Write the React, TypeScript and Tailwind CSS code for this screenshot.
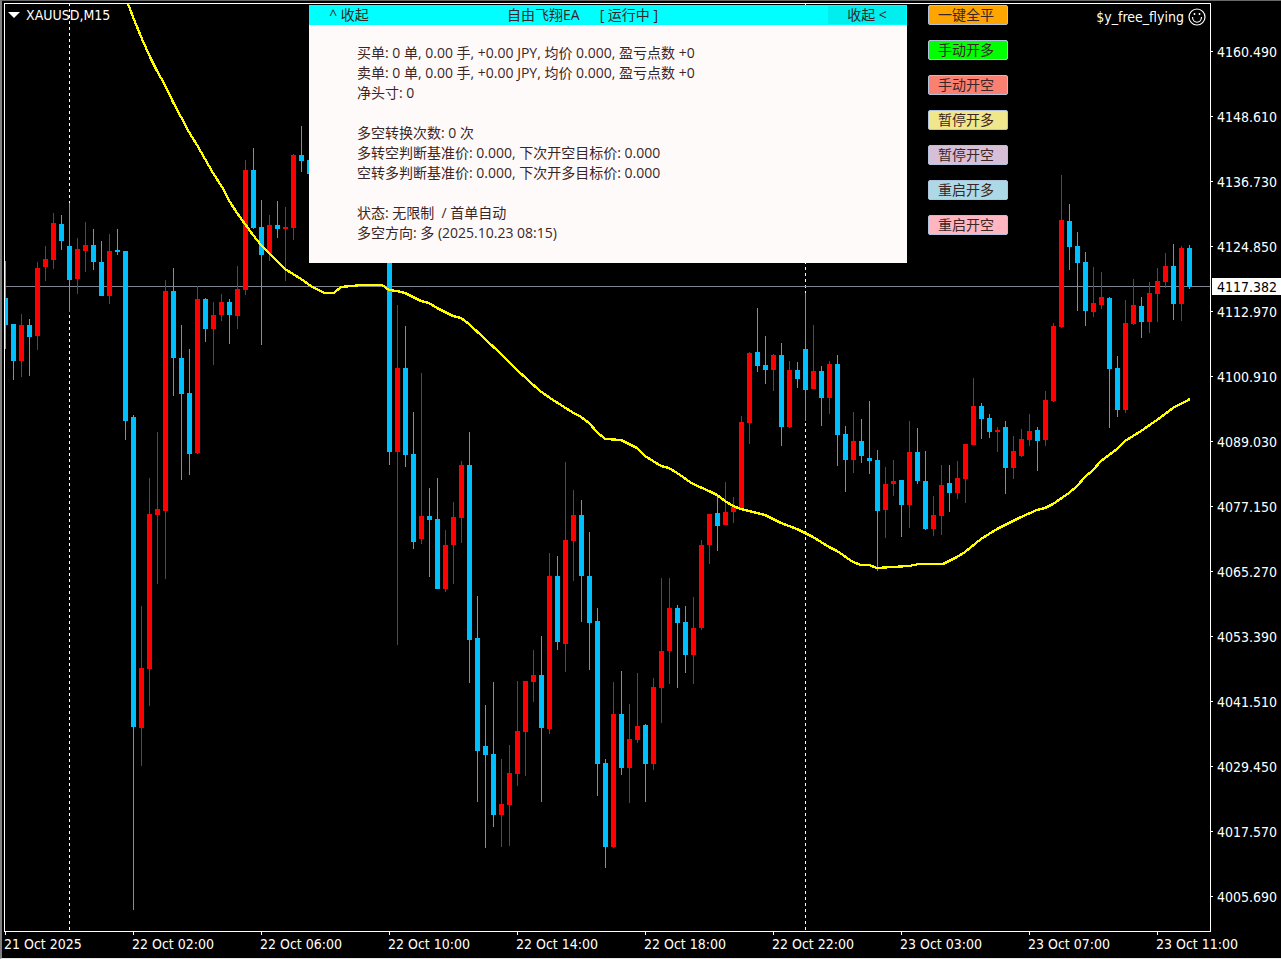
import React from "react";

type Candle = [high: number, low: number, top: number, bottom: number, dir: "u" | "d"];

const FIRST_X = 5;
const STEP = 8;

// Each run holds consecutive bars, starting at the given bar index.
const RUNS: { start: number; bars: Candle[] }[] = [
  {
    start: 0,
    bars: [
      [261, 349, 298, 325, "d"], [324, 380, 324, 361, "d"], [314, 377, 325, 361, "u"], [319, 376, 325, 337, "d"],
      [262, 350, 268, 336, "u"], [246, 281, 259, 267, "u"], [213, 269, 223, 260, "u"], [215, 250, 224, 241, "d"],
      [203, 312, 246, 280, "d"], [238, 294, 249, 279, "u"], [222, 272, 245, 251, "u"], [229, 270, 245, 262, "d"],
      [241, 296, 262, 296, "d"], [234, 304, 251, 296, "u"], [229, 255, 250, 252, "d"], [251, 440, 251, 421, "d"],
      [415, 910, 417, 727, "d"], [606, 766, 668, 728, "u"], [478, 706, 514, 669, "u"], [432, 584, 509, 515, "u"],
      [280, 579, 291, 511, "u"], [268, 396, 291, 358, "d"], [325, 480, 358, 394, "d"], [349, 475, 393, 454, "d"],
      [286, 454, 299, 453, "u"], [298, 342, 299, 329, "d"], [302, 365, 315, 329, "u"], [294, 321, 302, 315, "u"],
      [299, 344, 302, 315, "d"], [266, 329, 289, 316, "u"], [160, 295, 170, 290, "u"], [148, 229, 170, 228, "d"],
      [200, 345, 227, 255, "d"], [215, 261, 225, 253, "u"], [201, 238, 225, 229, "d"], [207, 281, 227, 229, "u"],
      [154, 240, 155, 228, "u"], [126, 172, 155, 161, "d"], [160, 174, 160, 174, "d"],
    ],
  },
  {
    start: 48,
    bars: [
      [230, 465, 240, 452, "d"], [305, 645, 368, 452, "u"], [326, 467, 368, 455, "d"], [412, 549, 454, 542, "d"],
      [373, 544, 516, 539, "u"], [488, 577, 516, 520, "d"], [478, 589, 519, 589, "d"], [530, 592, 545, 589, "u"],
      [502, 584, 517, 545, "u"], [461, 543, 465, 518, "u"], [432, 683, 465, 640, "d"], [596, 802, 638, 751, "d"],
      [705, 848, 746, 755, "d"], [682, 827, 754, 815, "d"], [759, 847, 804, 815, "u"], [745, 846, 773, 805, "u"],
      [681, 786, 731, 774, "u"], [681, 776, 681, 732, "u"], [650, 702, 675, 682, "u"], [636, 802, 675, 728, "d"],
      [553, 734, 576, 729, "u"], [556, 650, 576, 642, "d"], [462, 672, 540, 644, "u"], [490, 581, 515, 541, "u"],
      [500, 622, 515, 576, "d"], [532, 670, 576, 623, "d"], [608, 796, 621, 764, "d"], [759, 868, 763, 847, "d"],
      [682, 848, 714, 847, "u"], [671, 775, 714, 768, "d"], [704, 803, 739, 768, "u"], [673, 743, 726, 740, "u"],
      [724, 802, 725, 764, "d"], [678, 770, 687, 764, "u"], [578, 723, 651, 688, "u"], [578, 684, 608, 651, "u"],
      [605, 688, 608, 623, "d"], [606, 673, 622, 655, "d"], [597, 684, 628, 655, "u"], [540, 630, 545, 628, "u"],
      [514, 564, 514, 545, "u"], [496, 551, 513, 526, "d"], [482, 525, 512, 525, "u"], [497, 523, 507, 512, "u"],
      [416, 508, 422, 508, "u"], [352, 444, 353, 423, "u"], [308, 372, 352, 366, "d"], [336, 384, 365, 370, "d"],
      [354, 391, 355, 370, "u"], [343, 446, 355, 427, "d"], [361, 428, 370, 427, "u"], [362, 388, 370, 379, "d"],
      [293, 421, 349, 390, "d"], [325, 389, 371, 389, "u"], [366, 426, 371, 398, "d"], [361, 414, 364, 398, "u"],
      [355, 466, 364, 435, "d"], [426, 492, 434, 460, "d"], [412, 473, 441, 460, "u"], [419, 463, 441, 456, "d"],
      [401, 474, 458, 461, "d"], [450, 571, 460, 511, "d"], [467, 538, 484, 510, "u"], [460, 496, 481, 484, "u"],
      [480, 537, 480, 505, "d"], [421, 528, 452, 505, "u"], [428, 484, 452, 481, "d"], [451, 530, 481, 529, "d"],
      [496, 536, 515, 529, "u"], [465, 535, 485, 516, "u"], [465, 512, 483, 493, "d"], [461, 499, 478, 493, "u"],
      [444, 503, 444, 479, "u"], [378, 445, 406, 445, "u"], [403, 439, 406, 419, "d"], [414, 438, 418, 432, "d"],
      [427, 452, 430, 432, "u"], [421, 494, 427, 468, "d"], [436, 479, 451, 468, "u"], [429, 457, 439, 456, "u"],
      [414, 446, 431, 440, "u"], [427, 471, 430, 441, "d"], [391, 446, 400, 440, "u"], [323, 402, 326, 401, "u"],
      [175, 328, 220, 327, "u"], [204, 270, 221, 247, "d"], [232, 311, 246, 263, "d"], [252, 326, 262, 311, "d"],
      [267, 317, 303, 312, "u"], [272, 309, 297, 305, "u"], [297, 428, 298, 369, "d"], [356, 417, 368, 410, "d"],
      [300, 413, 323, 410, "u"], [279, 325, 305, 324, "u"], [297, 338, 306, 322, "d"], [282, 333, 293, 322, "u"],
      [268, 322, 281, 294, "u"], [253, 288, 266, 282, "u"], [244, 320, 266, 304, "d"], [246, 321, 248, 304, "u"],
      [245, 289, 248, 287, "d"],
    ],
  },
];

const AVERAGE =
  "128,4 135,22 142,39 150,57 157,71 165,85 173,102 181,117 189,132 197,145 205,159 213,173 222,187 230,202 237,213 245,224 253,235 261,245 269,253 277,261 285,269 293,274 301,279 311,286 324,293 334,293 341,287 351,286 362,285 382,285 389,290 397,291 405,293 421,301 429,303 437,308 453,316 461,318 469,324 485,339 500,353 517,370 540,391 553,400 572,412 581,417 589,423 597,432 605,439 621,440 637,448 645,456 661,466 669,468 677,473 693,484 709,491 717,495 725,501 733,506 741,509 765,515 781,523 797,529 813,537 829,547 837,551 853,562 861,565 869,565 877,568 893,567 909,566 919,564 943,564 957,557 965,552 981,539 997,529 1021,517 1037,510 1045,508 1053,504 1069,493 1077,486 1085,477 1093,470 1101,461 1109,455 1117,449 1125,441 1141,431 1157,420 1173,408 1190,399";

const PRICES = [
  "4160.490", "4148.610", "4136.730", "4124.850", "4112.970", "4100.910", "4089.030",
  "4077.150", "4065.270", "4053.390", "4041.510", "4029.450", "4017.570", "4005.690",
];

const TIMES = [
  "21 Oct 2025", "22 Oct 02:00", "22 Oct 06:00", "22 Oct 10:00", "22 Oct 14:00",
  "22 Oct 18:00", "22 Oct 22:00", "23 Oct 03:00", "23 Oct 07:00", "23 Oct 11:00",
];

const ACTIONS = [
  { label: "一键全平", color: "bg-[#ffa500]" },
  { label: "手动开多", color: "bg-[#00ff00]" },
  { label: "手动开空", color: "bg-[#fa8072]" },
  { label: "暂停开多", color: "bg-[#f0e68c]" },
  { label: "暂停开空", color: "bg-[#d8bfd8]" },
  { label: "重启开多", color: "bg-[#add8e6]" },
  { label: "重启开空", color: "bg-[#ffb6c1]" },
];

const INFO = [
  [
    "买单: 0 单, 0.00 手, +0.00 JPY, 均价 0.000, 盈亏点数 +0",
    "卖单: 0 单, 0.00 手, +0.00 JPY, 均价 0.000, 盈亏点数 +0",
    "净头寸: 0",
  ],
  [
    "多空转换次数: 0 次",
    "多转空判断基准价: 0.000, 下次开空目标价: 0.000",
    "空转多判断基准价: 0.000, 下次开多目标价: 0.000",
  ],
  ["状态: 无限制  / 首单自动", "多空方向: 多 (2025.10.23 08:15)"],
];

function PriceChart() {
  return (
    <svg
      className="absolute inset-0 h-full w-full"
      viewBox="5 4 1205 927"
      preserveAspectRatio="none"
      shapeRendering="crispEdges"
      aria-hidden="true"
    >
      <path d="M69.5 3V931M805.5 3V931" stroke="#fff" strokeDasharray="3 3" />
      <path d="M5 286.5H1210" stroke="#808490" />
      {RUNS.map((run) =>
        run.bars.map(([high, low, top, bottom, dir], i) => {
          const x = FIRST_X + (run.start + i) * STEP;
          return (
            <g key={x} fill={dir === "u" ? "#ff0000" : "#00bfff"}>
              <rect x={x} y={high} width={1} height={low - high} />
              <rect x={x - 2} y={top} width={5} height={bottom - top} />
            </g>
          );
        }),
      )}
      <polyline points={AVERAGE} fill="none" stroke="#ffff00" strokeWidth={2.3} />
    </svg>
  );
}

function InfoPanel() {
  return (
    <section className="w-[598px] shrink-0 bg-[#fffafa] text-[14px] leading-5 text-[#3a2626]">
      <header className="flex h-5 bg-[#00ffff]">
        <button type="button" className="w-20 whitespace-pre">^ 收起</button>
        <h1 className="flex flex-1 gap-5 pl-[118px]">
          <span>自由飞翔EA</span>
          <span>[ 运行中 ]</span>
        </h1>
        <button type="button" className="w-20 border border-[#00ffff] bg-[#00eeee] leading-[18px]">
          收起 &lt;
        </button>
      </header>
      <div className="flex flex-col gap-5 pt-[18px] pb-5 pl-12">
        {INFO.map((group) => (
          <div key={group[0]}>
            {group.map((line) => (
              <p key={line} className="whitespace-pre">{line}</p>
            ))}
          </div>
        ))}
      </div>
    </section>
  );
}

function Smiley() {
  return (
    <svg className="size-[18px]" viewBox="0 0 18 18" fill="none" stroke="#fff" aria-hidden="true">
      <circle cx="9" cy="9" r="8" strokeWidth="1.2" />
      <path d="M4.5 9C4.5 16 13.5 16 13.5 9" strokeWidth="1.2" />
      <path d="M6.5 5V7M11.5 5V7" strokeWidth="1.5" />
    </svg>
  );
}

export default function App() {
  return (
    <div className="flex min-h-screen flex-col overflow-hidden border-t border-b border-l-2 border-t-[#696969] border-b-[#e8e8e8] border-l-[#808080] bg-black pt-0.5 pl-0.5 font-['DejaVu_Sans_Condensed','Noto_Sans',sans-serif] text-[14px] leading-5 text-white">
      <main className="flex flex-1">
        <div className="relative flex-1 border border-white">
          <PriceChart />
          <div className="relative flex items-start pt-px">
            <div className="flex w-[304px] shrink-0 items-center gap-[6px] pl-[3px]">
              <svg className="h-[6px] w-3" viewBox="0 0 12 6" fill="#fff" aria-hidden="true">
                <path d="M0 0H12L6 6Z" />
              </svg>
              <span>XAUUSD,M15</span>
            </div>
            <div className="flex shrink-0 gap-[21px] font-['Open_Sans','Noto_Sans_CJK_SC',sans-serif]">
              <InfoPanel />
              <div className="flex w-20 flex-col gap-[15px] text-[#3a2626]">
                {ACTIONS.map(({ label, color }) => (
                  <button
                    key={label}
                    type="button"
                    className={`h-5 rounded-[2px] border border-[#b0c4de] pr-1 leading-[18px] ${color}`}
                  >
                    {label}
                  </button>
                ))}
              </div>
            </div>
            <div className="ml-auto flex items-center gap-1 pt-0.5 pr-1">
              <span>$y_free_flying</span>
              <Smiley />
            </div>
          </div>
        </div>
        <aside className="relative flex w-[70px] flex-col pt-4 pb-[3px]">
          {PRICES.map((price) => (
            <div key={price} className="flex flex-1 items-center gap-1">
              <span className="h-px w-0.5 bg-white" />
              <span>{price}</span>
            </div>
          ))}
          <div className="absolute top-[275px] right-0 left-px h-[17px] bg-white pl-[5px] leading-[18px] text-black">
            4117.382
          </div>
        </aside>
      </main>
      <footer className="flex h-[26px] overflow-hidden">
        {TIMES.map((time) => (
          <div key={time} className="w-32 shrink-0">
            <div className="ml-px h-[3px] w-px bg-white" />
            <span className="block leading-[18px] whitespace-nowrap">{time}</span>
          </div>
        ))}
      </footer>
    </div>
  );
}
